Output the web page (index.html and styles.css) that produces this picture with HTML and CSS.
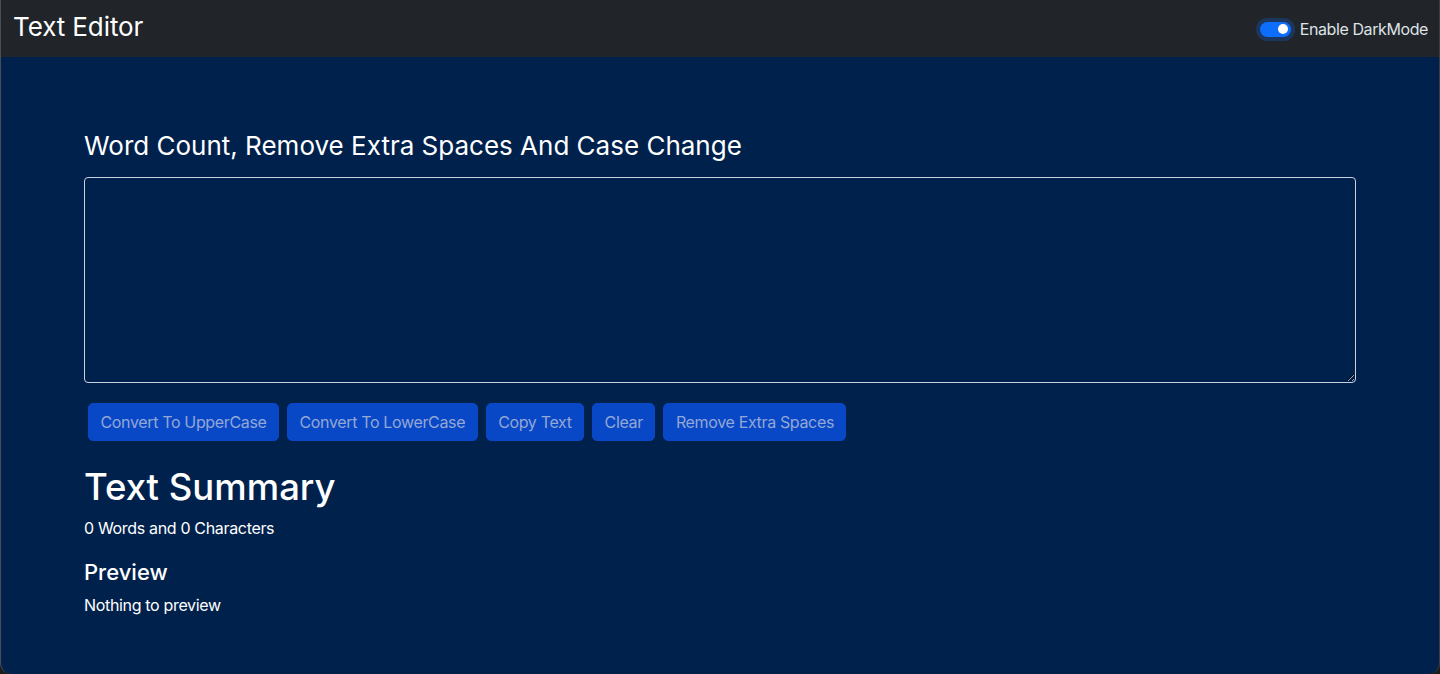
FILE: index.html
```html
<!DOCTYPE html>
<html lang="en">
<head>
<meta charset="utf-8">
<title>Text Editor</title>
<link rel="stylesheet" href="styles.css">
</head>
<body>
<div class="window">
  <nav class="navbar">
    <span class="brand">Text Editor</span>
    <label class="switch">
      <span class="track"><span class="knob"></span></span>
      <span class="switch-label">Enable DarkMode</span>
    </label>
  </nav>
  <main class="container">
    <h1 class="title">Word Count, Remove Extra Spaces And Case Change</h1>
    <textarea class="editor" rows="8"></textarea>
    <div class="actions">
      <button class="btn" disabled>Convert To UpperCase</button>
      <button class="btn" disabled>Convert To LowerCase</button>
      <button class="btn" disabled>Copy Text</button>
      <button class="btn" disabled>Clear</button>
      <button class="btn" disabled>Remove Extra Spaces</button>
    </div>
    <section class="summary">
      <h2 class="summary-title">Text Summary</h2>
      <p class="count">0 Words and 0 Characters</p>
      <h3 class="preview-title">Preview</h3>
      <p class="preview">Nothing to preview</p>
    </section>
  </main>
</div>
</body>
</html>
```
FILE: styles.css
```css
* { box-sizing: border-box; }
html, body {
  margin: 0;
  height: 100%;
  background: #1b1b1b;
}
body {
  font-family: Inter, "Noto Sans", "Liberation Sans", sans-serif;
  color: #ffffff;
}
.window {
  height: 674px;
  background: #00214c;
  border-radius: 0 0 11px 11px;
  border-left: 1px solid #4a4d52;
  border-right: 1px solid #3a3d42;
  overflow: hidden;
  display: flex;
  flex-direction: column;
}
.navbar {
  height: 57px;
  flex: none;
  background: #212529;
  display: flex;
  align-items: center;
  justify-content: space-between;
  padding: 0 11px 4px 12px;
}
.brand {
  font-size: 26px;
  line-height: 1.2;
  color: #fff;
  letter-spacing: -0.1px;
}
.switch {
  display: flex;
  align-items: center;
  gap: 9px;
  padding-top: 5px;
}
.track {
  width: 31px;
  height: 15px;
  border-radius: 8px;
  background: #0d6efd;
  box-shadow: 0 0 0 4px rgba(13, 110, 253, 0.25);
  display: flex;
  align-items: center;
  justify-content: flex-end;
  padding: 0 3px;
}
.knob {
  width: 10px;
  height: 10px;
  border-radius: 50%;
  background: #fff;
}
.switch-label {
  font-size: 16px;
  color: #dee2e6;
  letter-spacing: -0.4px;
}
.container {
  margin: 73px 83px 0 83px;
  display: flex;
  flex-direction: column;
}
.title {
  margin: 0 0 14px 0;
  font-size: 26px;
  font-weight: 400;
  line-height: 1.25;
}
.editor {
  height: 206px;
  width: 100%;
  background: #00214c;
  border: 1px solid #c9d1dc;
  border-radius: 4px;
  color: #fff;
  font: inherit;
  padding: 6px 12px;
  resize: vertical;
}
.actions {
  display: flex;
  margin-top: 20px;
  gap: 8px;
  padding-left: 4px;
}
.btn {
  height: 38px;
  padding: 0 11.5px;
  background: #0847c6;
  border: 1px solid #0847c6;
  border-radius: 5px;
  color: #93a8d5;
  font: inherit;
  font-size: 16px;
  letter-spacing: -0.35px;
}
.summary {
  margin-top: 25px;
}
.summary-title {
  margin: 0 0 7px 0;
  font-size: 36.5px;
  font-weight: 500;
  line-height: 1.2;
}
.count, .preview {
  margin: 0 0 19px 0;
  font-size: 16px;
  line-height: 24px;
  letter-spacing: -0.33px;
}
.preview-title {
  margin: 0 0 7px 0;
  font-size: 22px;
  font-weight: 500;
  line-height: 1.2;
}
```
